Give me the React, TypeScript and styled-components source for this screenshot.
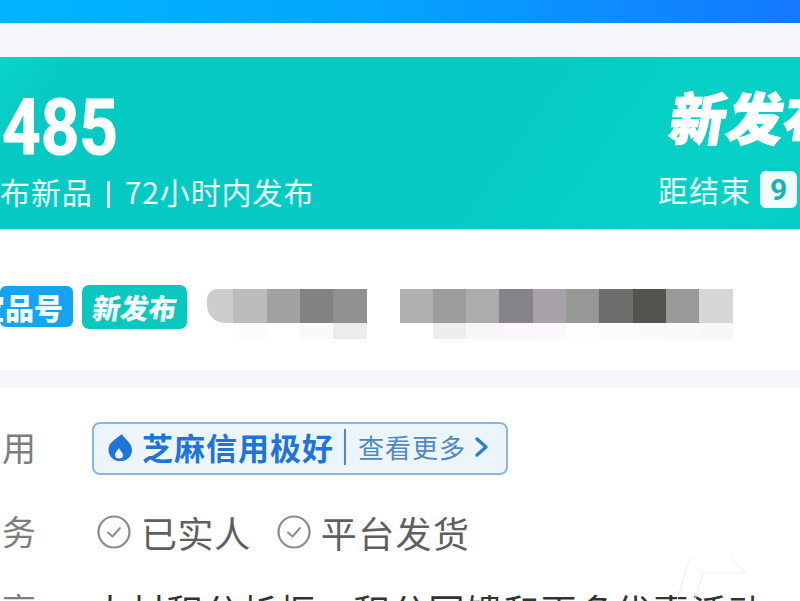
import React from 'react';
import styled, { createGlobalStyle } from 'styled-components';

const CJK = '"Noto Sans CJK SC", "Noto Sans", sans-serif';

const GlobalStyle = createGlobalStyle`
  html, body {
    margin: 0;
    padding: 0;
    background: #ffffff;
  }
  body {
    font-family: ${CJK};
  }
`;

const Frame = styled.div`
  position: relative;
  width: 800px;
  height: 601px;
  overflow: hidden;
`;

const Page = styled.div`
  width: 800px;
  height: 601px;
  overflow: hidden;
  background: #ffffff;
  display: flex;
  flex-direction: column;
`;

const TopBar = styled.div`
  flex: none;
  height: 23px;
  background: linear-gradient(90deg, #00b4ff 0%, #04a6ff 45%, #1478ff 100%);
`;

const Strip = styled.div<{ $height: number }>`
  flex: none;
  height: ${(props) => props.$height}px;
  background: #f4f6fa;
`;

const Banner = styled.div`
  flex: none;
  height: 172px;
  box-sizing: border-box;
  padding: 0 0 0 2px;
  display: flex;
  justify-content: space-between;
  background: linear-gradient(125deg, #0bd4ca 0%, #05c9c3 9%, #05c9c3 55%, #07d1c6 82%, #06cdc5 100%);
  color: #ffffff;
  overflow: hidden;
`;

const BannerLeft = styled.div`
  display: flex;
  flex-direction: column;
  align-items: flex-start;
`;

const BigNumber = styled.div`
  font-family: Roboto, "Liberation Sans", sans-serif;
  font-weight: 700;
  font-size: 77px;
  line-height: 72px;
  -webkit-text-stroke: 1px #ffffff;
  transform: scaleX(0.875);
  transform-origin: left center;
  margin-top: 35px;
`;

const BannerCaption = styled.div`
  font-size: 30px;
  line-height: 40px;
  margin-top: 7px;
  margin-left: -2px;
  white-space: nowrap;
  color: #e9fbf9;
  letter-spacing: 0.9px;
`;

const CaptionDivider = styled.span`
  display: inline-block;
  width: 3px;
  height: 27px;
  margin: 0 15px 0 14px;
  background: #e9fbf9;
  vertical-align: -4px;
`;

const BannerRight = styled.div`
  flex: none;
  width: 142px;
  display: flex;
  flex-direction: column;
  white-space: nowrap;
`;

const BannerTitle = styled.div`
  font-size: 56px;
  line-height: 68px;
  font-weight: 900;
  letter-spacing: 1px;
  -webkit-text-stroke: 1.5px #ffffff;
  transform: skewX(-9deg);
  margin-top: 25px;
  margin-left: 13px;
`;

const CountdownRow = styled.div`
  display: flex;
  align-items: center;
  margin-top: 19px;
  font-size: 30px;
  line-height: 40px;
  letter-spacing: 1px;
  color: #e9fbf9;
`;

const CountdownCell = styled.span`
  flex: none;
  width: 37px;
  height: 37px;
  margin-left: 9px;
  border-radius: 6px;
  background: #effcfb;
  color: #12b5af;
  font-family: Roboto, sans-serif;
  font-weight: 700;
  font-size: 30px;
  line-height: 37px;
  letter-spacing: 0;
  text-align: center;
`;

const TagRow = styled.div`
  flex: none;
  height: 141px;
  box-sizing: border-box;
  padding-top: 56px;
  display: flex;
  align-items: flex-start;
  overflow: hidden;
`;

const ProductTag = styled.div`
  flex: none;
  width: 73px;
  height: 41px;
  margin: 1px 9px 0 0;
  border-radius: 6px;
  background: #14a4f2;
  color: #f4fdfd;
  font-size: 29px;
  line-height: 42px;
  font-weight: 900;
  white-space: nowrap;
  overflow: hidden;
`;

const ProductTagText = styled.span`
  display: block;
  margin-left: -24px;
`;

const NewTag = styled.div`
  flex: none;
  width: 105px;
  height: 44px;
  margin-right: 10px;
  box-sizing: border-box;
  padding-left: 11px;
  border-radius: 7px;
  background: #0ac8bd;
  color: #f4fdfd;
  font-size: 28px;
  line-height: 44px;
  font-weight: 900;
  white-space: nowrap;
`;

const SkewedText = styled.span`
  display: block;
  transform: skewX(-8deg);
`;

const Mosaic = styled.div<{ $gap: number }>`
  flex: none;
  margin-left: ${(props) => props.$gap}px;
  margin-top: 4px;
  display: flex;
  flex-direction: column;
`;

const MosaicRow = styled.div`
  display: flex;
  height: 34px;
`;

const Pixel = styled.div<{ $rounded?: boolean }>`
  flex: none;
  width: ${(props) => (props.$rounded ? '26.4px' : '33.3px')};
  border-radius: ${(props) => (props.$rounded ? '10px 0 0 18px' : '0')};
`;

const Ghost = styled.div`
  height: 16px;
  display: flex;
`;

const DetailList = styled.div`
  flex: 1;
  display: flex;
  flex-direction: column;
  padding-top: 34px;
`;

const DetailRow = styled.div<{ $height: number; $bottom?: number }>`
  flex: none;
  height: ${(props) => props.$height}px;
  box-sizing: border-box;
  padding-bottom: ${(props) => props.$bottom ?? 0}px;
  display: flex;
  align-items: center;
  white-space: nowrap;
`;

const DetailLabel = styled.div`
  flex: none;
  width: 92px;
  box-sizing: border-box;
  padding: 0 0 3px 2px;
  font-size: 34px;
  line-height: 40px;
  color: #7d7d7d;
`;

const CreditBadge = styled.div`
  flex: none;
  box-sizing: border-box;
  width: 416px;
  height: 53px;
  padding: 0 0 3px 14px;
  border: 2px solid #8cb6d8;
  border-radius: 8px;
  background: #edf5fc;
  display: flex;
  align-items: center;
`;

const CreditName = styled.span`
  font-size: 31px;
  font-weight: 700;
  line-height: 40px;
  color: #1f74d8;
  margin-left: 10px;
  letter-spacing: 1px;
`;

const BadgeDivider = styled.span`
  flex: none;
  width: 2px;
  height: 36px;
  background: #4f8bc6;
  margin: 0 12px 0 10px;
`;

const CreditMore = styled.span`
  font-size: 26px;
  line-height: 40px;
  color: #4f88c0;
  letter-spacing: 1px;
`;

const ChevronIcon = styled.svg`
  flex: none;
  margin-left: 6px;
`;

const ServiceItem = styled.div<{ $indent: number; $spacing: number }>`
  display: flex;
  align-items: center;
  margin-left: ${(props) => props.$indent}px;
  font-size: 36px;
  line-height: 44px;
  letter-spacing: ${(props) => props.$spacing}px;
  color: #5f5f5f;
`;

const ServiceText = styled.span`
  margin-left: 10px;
`;

const ClippedLine = styled.div`
  font-size: 36px;
  line-height: 44px;
  color: #333333;
  letter-spacing: 1.4px;
`;

const Watermark = styled.svg`
  position: absolute;
  left: 670px;
  top: 552px;
`;

const firstBlocks = ['#cdcccf', '#bcbdba', '#a3a1a3', '#858285', '#918f92'];
const secondBlocks = ['#b1b0b1', '#9d9c9d', '#adacad', '#87838a', '#a7a2a8', '#959895', '#6b6e6a', '#51534f', '#999999', '#d6d6d6'];
const firstGhost = ['transparent', '#fcfcfc', 'transparent', '#fafafa', '#ecebee'];
const secondGhost = ['transparent', '#eeeeee', '#f7f7f7', '#faf6fa', '#fbf7fb', '#fdfdfd', '#fcfcfc', '#fafafa', '#fbf8f8', '#f5f8f7'];

const CheckCircle = (): React.ReactElement => (
  <svg width="34" height="34" viewBox="0 0 34 34" fill="none">
    <circle cx="17" cy="17" r="15.500" stroke="#8c8c8c" strokeWidth="2.2" />
    <path d="M11 17.500l4.500 4 7.500-8.500" stroke="#8c8c8c" strokeWidth="1.900" strokeLinecap="round" strokeLinejoin="round" />
  </svg>
);

const SesameIcon = (): React.ReactElement => (
  <svg width="24" height="27" viewBox="0 0 24 27">
    <path fillRule="evenodd" fill="#1f74d8" d="M14 0c1 4 10 8 10 16a11.500 11 0 0 1-23.500 0C.5 8 8 5 14 0zM11 14c-2 3-4 4.500-4 7a4 3.500 0 0 0 8 0c0-2.500-3-4-4-7z" />
  </svg>
);

export default function App(): React.ReactElement {
  return (
    <Frame>
      <GlobalStyle />
      <Page>
        <TopBar />
        <Strip $height={34} />
        <Banner>
          <BannerLeft>
            <BigNumber>485</BigNumber>
            <BannerCaption>
              布新品
              <CaptionDivider />
              72小时内发布
            </BannerCaption>
          </BannerLeft>
          <BannerRight>
            <BannerTitle>新发布</BannerTitle>
            <CountdownRow>
              距结束
              <CountdownCell>9</CountdownCell>
            </CountdownRow>
          </BannerRight>
        </Banner>
        <TagRow>
          <ProductTag>
            <ProductTagText>宝品号</ProductTagText>
          </ProductTag>
          <NewTag>
            <SkewedText>新发布</SkewedText>
          </NewTag>
          <Mosaic $gap={10}>
            <MosaicRow>
              {firstBlocks.map((color, index) => <Pixel key={index} $rounded={index === 0} style={{ background: color }} />)}
            </MosaicRow>
            <Ghost>
              {firstGhost.map((color, index) => <Pixel key={index} $rounded={index === 0} style={{ background: color }} />)}
            </Ghost>
          </Mosaic>
          <Mosaic $gap={33}>
            <MosaicRow>
              {secondBlocks.map((color, index) => <Pixel key={index} style={{ background: color }} />)}
            </MosaicRow>
            <Ghost>
              {secondGhost.map((color, index) => <Pixel key={index} style={{ background: color }} />)}
            </Ghost>
          </Mosaic>
        </TagRow>
        <Strip $height={18} />
        <DetailList>
          <DetailRow $height={53}>
            <DetailLabel>用</DetailLabel>
            <CreditBadge>
              <SesameIcon />
              <CreditName>芝麻信用极好</CreditName>
              <BadgeDivider />
              <CreditMore>查看更多</CreditMore>
              <ChevronIcon width="20" height="24" viewBox="0 0 20 24" fill="none">
                <path d="M5 4l9 8-9 8" stroke="#2f7fd0" strokeWidth="3.400" strokeLinecap="round" strokeLinejoin="round" />
              </ChevronIcon>
            </CreditBadge>
          </DetailRow>
          <DetailRow $height={115} $bottom={1}>
            <DetailLabel>务</DetailLabel>
            <ServiceItem $indent={5} $spacing={0.6}>
              <CheckCircle />
              <ServiceText>已实人</ServiceText>
            </ServiceItem>
            <ServiceItem $indent={26} $spacing={1.4}>
              <CheckCircle />
              <ServiceText>平台发货</ServiceText>
            </ServiceItem>
          </DetailRow>
          <DetailRow $height={44} $bottom={4}>
            <DetailLabel>享</DetailLabel>
            <ClippedLine>大材积分析框，积分回馈和更多优惠活动</ClippedLine>
          </DetailRow>
        </DetailList>
      </Page>
      <Watermark width="110" height="49" viewBox="0 0 110 49" fill="none" stroke="#eeeeee" strokeWidth="1">
        <path d="M20 6L7 48M33 21h45M60 6l15 14M33 21l-8 27" />
      </Watermark>
    </Frame>
  );
}
